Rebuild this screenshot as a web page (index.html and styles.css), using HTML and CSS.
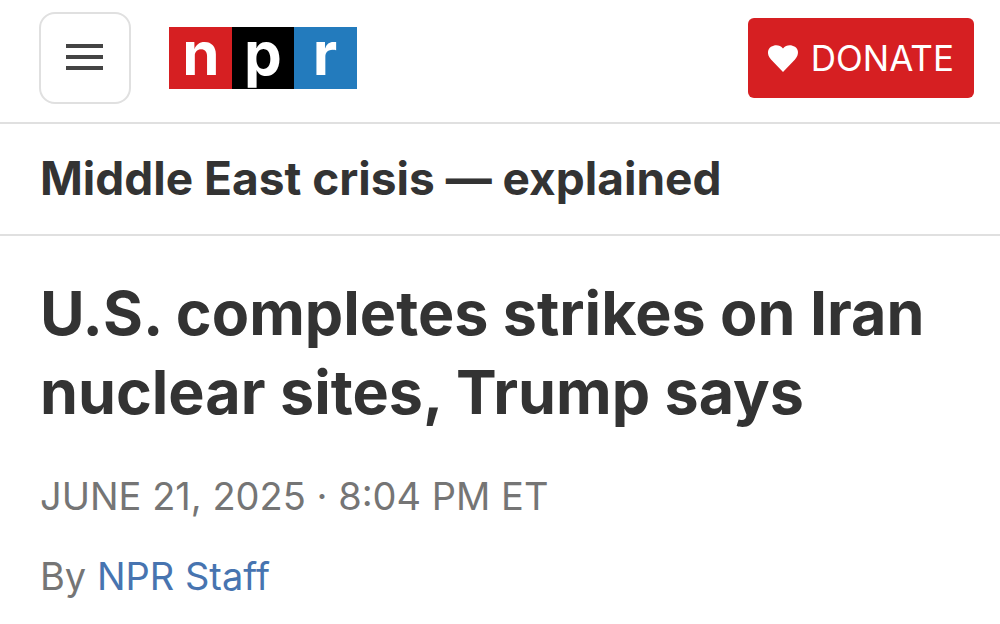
FILE: index.html
```
<!DOCTYPE html>
<html lang="en">
<head>
    <meta charset="UTF-8">
    <meta name="viewport" content="width=device-width, initial-scale=1.0">
    <title>U.S. completes strikes on Iran nuclear sites, Trump says : NPR</title>
    <link rel="stylesheet" href="styles.css">
</head>
<body>
    <header class="site-header">
        <button class="menu-button" type="button" aria-label="Open navigation menu">
            <svg width="38" height="28" viewBox="0 0 38 28" aria-hidden="true">
                <path d="M0 0h37v4H0zM0 11h37v4H0zM0 22h37v4H0z" fill="#444"/>
            </svg>
        </button>
        <a class="logo" href="#" aria-label="NPR home">
            <svg width="188" height="62" viewBox="0 0 188 62" aria-hidden="true">
                <path d="M0 0h63v62H0z" fill="#d61f22"/>
                <path d="M63 0h62v62H63z" fill="#000"/>
                <path d="M125 0h63v62h-63z" fill="#237bbd"/>
                <g class="logo-letters">
                    <text x="32" y="48">n</text>
                    <text x="94" y="48">p</text>
                    <text x="156" y="48">r</text>
                </g>
            </svg>
        </a>
        <button class="donate-button" type="button">
            <svg width="30" height="27" viewBox="0 0 30 27" aria-hidden="true">
                <path d="M15 27 3 14.500C-1.500 9.500-.5 4 3 1.800 7-.8 12-.3 15 3.500 18-.3 23-.8 27 1.800 30.500 4 31.500 9.500 27 14.500z" fill="#fff"/>
            </svg>
            DONATE
        </button>
    </header>

    <nav class="topic-bar">
        <a href="#">Middle East crisis — explained</a>
    </nav>

    <main class="story">
        <h1>U.S. completes strikes on Iran nuclear sites, Trump says</h1>
        <p class="dateline"><time datetime="2025-06-21T20:04">JUNE 21, 2025 · 8:04 PM ET</time></p>
        <p class="byline">By <a href="#">NPR Staff</a></p>
    </main>
</body>
</html>
```

FILE: styles.css
```
* {
    box-sizing: border-box;
}
body {
    margin: 0;
    background: #fff;
    color: #333;
    font-family: Inter, 'Noto Sans', sans-serif;
}
a {
    color: inherit;
    text-decoration: none;
}
button {
    cursor: pointer;
    font-family: inherit;
}
svg {
    display: block;
    overflow: visible;
}
.site-header {
    display: flex;
    align-items: center;
    padding: 12px 26px 18px 39px;
    border-bottom: 2px solid #e0e0e0;
}
.menu-button {
    display: flex;
    align-items: center;
    justify-content: center;
    width: 92px;
    height: 92px;
    padding: 0;
    background: #fff;
    border: 2px solid #e0e0e0;
    border-radius: 16px;
}
.logo {
    margin-left: 38px;
}
.logo-letters {
    fill: #fff;
    font-size: 60px;
    font-weight: 700;
    text-anchor: middle;
}
.donate-button {
    display: flex;
    align-items: center;
    gap: 13px;
    height: 80px;
    margin-left: auto;
    padding: 0 20px;
    background: #d61f22;
    border: 0;
    border-radius: 6px;
    color: #fff;
    font-size: 35px;
}
.topic-bar {
    padding: 24px 40px 26px;
    border-bottom: 2px solid #e0e0e0;
    font-size: 46px;
    font-weight: 700;
    line-height: 60px;
}
.story {
    padding: 38px 40px;
}
h1 {
    margin: 0;
    font-size: 61px;
    font-weight: 700;
    line-height: 79px;
}
.dateline,
.byline {
    color: #757575;
    font-size: 38px;
    line-height: 48px;
}
.dateline {
    margin: 40px 0 32px;
}
.byline {
    margin: 0;
}
.byline a {
    color: #4774b0;
}
```
